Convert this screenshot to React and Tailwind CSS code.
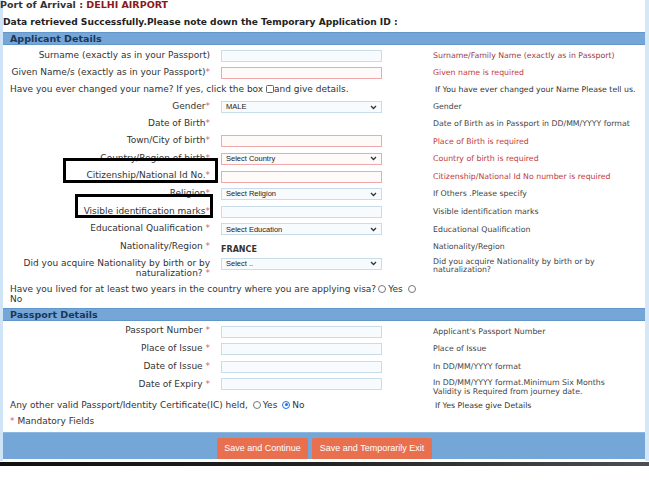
import React from 'react';

const LABEL_W = 'w-[207px]';

const Star = ({ space }) => (
  <span className="text-[#e0605a]">{space ? ' *' : '*'}</span>
);

const Input = ({ red }) => (
  <div
    className={`w-[161px] h-[12px] border ${
      red ? 'border-[#f0a8a8] bg-[#fffafa]' : 'border-[#c8dcea] bg-[#f8fbfd]'
    }`}
  />
);

const Select = ({ value, red }) => (
  <div
    className={`w-[161px] h-[12px] border flex items-center justify-between px-[4px] ${
      red ? 'border-[#f0a8a8] bg-[#fffafa]' : 'border-[#c8dcea] bg-[#f8fbfd]'
    }`}
  >
    <span className="text-[7.5px] text-[#222] font-['Liberation_Sans',sans-serif] leading-none">{value}</span>
    <svg width="7" height="5" viewBox="0 0 7 5">
      <path d="M1 1l2.5 2.5L6 1" fill="none" stroke="#333" strokeWidth="1.3" />
    </svg>
  </div>
);

const Radio = ({ checked }) => (
  <span
    className={`inline-block align-middle w-[8px] h-[8px] rounded-full border mx-[2px] relative -top-[1px] ${
      checked ? 'border-[#1a73e8] bg-white' : 'border-[#777] bg-white'
    }`}
  >
    {checked && <span className="absolute inset-[1.5px] rounded-full bg-[#1a73e8]" />}
  </span>
);

const Row = ({ label, star, space, field, value, red, hint, hintColor, tall }) => (
  <div className={`flex items-center ${tall ? 'h-[17.6px]' : 'h-[17px]'}`}>
    <div className={`${LABEL_W} text-right text-[9px] text-[#333] whitespace-nowrap relative -top-[0.5px]`}>
      {label}
      {star && <Star space={space} />}
    </div>
    <div className="w-[11px]" />
    <div className="w-[161px]">
      {field === 'input' && <Input red={red} />}
      {field === 'select' && <Select value={value} red={red} />}
      {field === 'text' && <span className="text-[8px] font-bold text-[#333]">{value}</span>}
    </div>
    <div className="w-[51px]" />
    <div className={`text-[7.8px] whitespace-nowrap ${hintColor || 'text-[#444]'}`}>{hint}</div>
  </div>
);

const SectionBar = ({ title }) => (
  <div className="h-[13px] bg-[#74a7d8] border-y border-[#6397ca] flex items-center pl-[7px]">
    <span className="text-[9.5px] font-bold text-[#1d3557] leading-none">{title}</span>
  </div>
);

const maroon = 'text-[#9a3b46]';
const red = 'text-[#c33a3a]';

export default function App() {
  const applicant = [
    { label: 'Surname (exactly as in your Passport)', field: 'input', hint: 'Surname/Family Name (exactly as in Passport)', hintColor: maroon },
    { label: 'Given Name/s (exactly as in your Passport)', star: true, field: 'input', red: true, hint: 'Given name is required', hintColor: red },
  ];
  const applicant2 = [
    { label: 'Gender', star: true, field: 'select', value: 'MALE', hint: 'Gender' },
    { label: 'Date of Birth', star: true, hint: 'Date of Birth as in Passport in DD/MM/YYYY format' },
    { label: 'Town/City of birth', star: true, tall: true, field: 'input', red: true, hint: 'Place of Birth is required', hintColor: red },
    { label: 'Country/Region of birth', star: true, tall: true, field: 'select', value: 'Select Country', red: true, hint: 'Country of birth is required', hintColor: red },
    { label: 'Citizenship/National Id No.', star: true, tall: true, field: 'input', red: true, hint: 'Citizenship/National Id No number is required', hintColor: red },
    { label: 'Religion', star: true, tall: true, field: 'select', value: 'Select Religion', hint: 'If Others .Please specify' },
    { label: 'Visible identification marks', star: true, tall: true, field: 'input', hint: 'Visible identification marks' },
    { label: 'Educational Qualification', star: true, space: true, tall: true, field: 'select', value: 'Select Education', hint: 'Educational Qualification' },
    { label: 'Nationality/Region', star: true, space: true, tall: true, field: 'text', value: 'FRANCE', hint: 'Nationality/Region' },
  ];
  const passport = [
    { label: 'Passport Number', star: true, space: true, tall: true, field: 'input', hint: "Applicant's Passport Number" },
    { label: 'Place of Issue', star: true, space: true, tall: true, field: 'input', hint: 'Place of Issue' },
    { label: 'Date of Issue', star: true, space: true, tall: true, field: 'input', hint: 'In DD/MM/YYYY format' },
  ];

  return (
    <div className="w-[649px] h-[500px] bg-white overflow-hidden relative font-['DejaVu_Sans',Verdana,sans-serif]">
      <div className="flex h-[461px]">
        <div className="w-[3px] bg-[#cfe4f7]" />
        <div className="flex-1 relative">
          {/* Header lines */}
          <div className="-ml-[3px] h-[10px] text-[9.5px] font-bold text-[#333] leading-[9px] whitespace-nowrap">
            Port of Arrival : <span className="text-[#8b1a1a]">DELHI AIRPORT</span>
          </div>
          <div className="mt-[4px] h-[18px] text-[9.1px] font-bold text-[#222] leading-[16px] whitespace-nowrap">
            Data retrieved Successfully.Please note down the Temporary Application ID :
          </div>

          <SectionBar title="Applicant Details" />
          <div className="pt-[2.6px]">
            {applicant.map((r, i) => <Row key={i} {...r} />)}
            <div className="flex items-center h-[17px]">
              <div className="w-[425px] pl-[7px] text-[9px] text-[#333] whitespace-nowrap">
                Have you ever changed your name? If yes, click the box{' '}
                <span className="inline-block align-middle w-[8px] h-[8px] border border-[#666] rounded-[1.5px] relative -top-[1px]" />
                and give details.
              </div>
              <div className="pl-[7px] text-[7.8px] text-[#333] whitespace-nowrap">If You have ever changed your Name Please tell us.</div>
            </div>
            {applicant2.map((r, i) => <Row key={i} {...r} />)}
            <div className="flex items-start h-[28.7px] pt-[2px]">
              <div className={`${LABEL_W} text-right text-[9px] text-[#333] leading-[10px]`}>
                Did you acquire Nationality by birth or by
                <br />
                naturalization?<Star space />
              </div>
              <div className="w-[11px]" />
              <div className="w-[161px]">
                <Select value="Select .." />
              </div>
              <div className="w-[51px]" />
              <div className="text-[7.8px] text-[#444] leading-[8.5px]">
                Did you acquire Nationality by birth or by
                <br />
                naturalization?
              </div>
            </div>
            <div className="pl-[7px] text-[9px] text-[#333] leading-[10px] h-[24px]">
              Have you lived for at least two years in the country where you are applying visa?
              <Radio />Yes <Radio />
              <br />
              No
            </div>
          </div>

          <SectionBar title="Passport Details" />
          <div className="pt-[1.5px]">
            {passport.map((r, i) => <Row key={i} {...r} />)}
            <div className="flex items-start h-[22.5px] pt-[2.5px]">
              <div className={`${LABEL_W} text-right text-[9px] text-[#333] leading-[12px]`}>
                Date of Expiry<Star space />
              </div>
              <div className="w-[11px]" />
              <div className="w-[161px]">
                <Input />
              </div>
              <div className="w-[51px]" />
              <div className="text-[7.8px] text-[#444] leading-[9px]">
                In DD/MM/YYYY format.Minimum Six Months
                <br />
                Validity is Required from journey date.
              </div>
            </div>
            <div className="flex items-center h-[16px]">
              <div className="w-[425px] pl-[7px] text-[9px] text-[#333] whitespace-nowrap">
                Any other valid Passport/Identity Certificate(IC) held, <Radio />Yes <Radio checked />No
              </div>
              <div className="pl-[7px] text-[7.8px] text-[#333] whitespace-nowrap">If Yes Please give Details</div>
            </div>
            <div className="pl-[7px] h-[16px] flex items-center text-[9px] text-[#333]">
              <span className="text-[#e0605a] mr-[3px]">*</span>Mandatory Fields
            </div>
          </div>

          {/* Bottom bar */}
          <div className="mt-[2px] h-[27px] bg-[#74a7d8] border-t border-[#8cb7e0] flex items-end pl-[214px] gap-[4px]">
            <div className="w-[91px] h-[21px] bg-[#e8704f] rounded-t-[2px] flex items-center justify-center text-white text-[9px] font-['Liberation_Sans',Arial,sans-serif]">
              Save and Continue
            </div>
            <div className="w-[120px] h-[21px] bg-[#e8704f] rounded-t-[2px] flex items-center justify-center text-white text-[9px] font-['Liberation_Sans',Arial,sans-serif]">
              Save and Temporarily Exit
            </div>
          </div>

          {/* Highlight boxes drawn over the screenshot */}
          <div className="absolute left-[60px] top-[158px] w-[155px] h-[25px] border-[3px] border-black" />
          <div className="absolute left-[72px] top-[194px] w-[138px] h-[24px] border-[3px] border-black" />
        </div>
        <div className="w-[4px] bg-[#d5e8f7]" />
      </div>
      <div className="h-[1px]" />
      <div className="h-[4px] bg-gradient-to-r from-[#111] via-[#222] to-[#4a4f55]" />
    </div>
  );
}
